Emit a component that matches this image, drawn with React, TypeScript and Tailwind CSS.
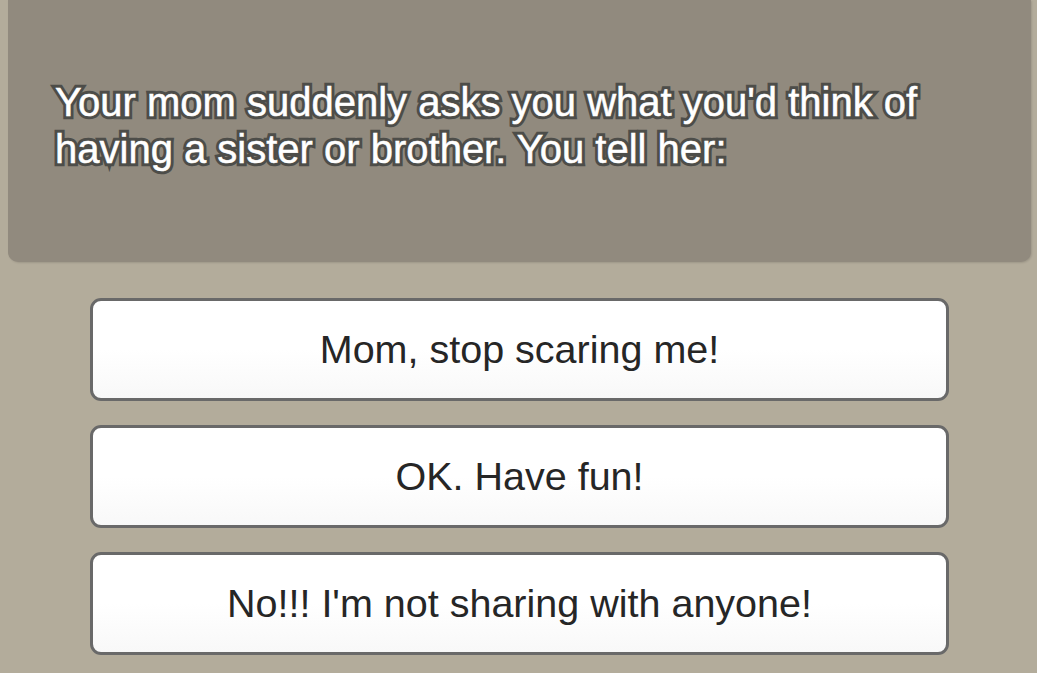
import React from "react";

const choices = [
  "Mom, stop scaring me!",
  "OK. Have fun!",
  "No!!! I'm not sharing with anyone!",
];

function Question() {
  const content = (
    <>
      Your mom suddenly asks you what you'd think of
      <br />
      having a sister or brother. You tell her:
    </>
  );
  return (
    <div className="relative mt-[-10px] text-[40px] leading-[47px]">
      <p aria-hidden="true" className="text-[#4d4d49] [-webkit-text-stroke:6.5px_#4d4d49] select-none">
        {content}
      </p>
      <p className="absolute inset-0 text-white [-webkit-text-stroke:0.5px_#ffffff]">{content}</p>
    </div>
  );
}

export default function App() {
  return (
    <div className="w-[1037px] h-[673px] overflow-hidden bg-[#b3ac9b] font-['Liberation_Sans',Arial,sans-serif]">
      <div className="mx-[8px] mr-[6px] h-[262px] rounded-b-[10px] bg-[#918a7e] shadow-[1px_1px_2px_rgba(0,0,0,0.12)] flex items-center pl-[47px] pr-[30px]">
        <Question />
      </div>
      <div className="mt-[36px] ml-[90px] w-[859px] flex flex-col gap-[24px]">
        {choices.map((c) => (
          <button
            key={c}
            className="h-[103px] w-full rounded-[11px] border-[3px] border-[#696969] bg-gradient-to-b from-white via-white to-[#f8f8f8] text-[39.5px] text-[#262626] flex items-center justify-center"
          >
            {c}
          </button>
        ))}
      </div>
    </div>
  );
}
